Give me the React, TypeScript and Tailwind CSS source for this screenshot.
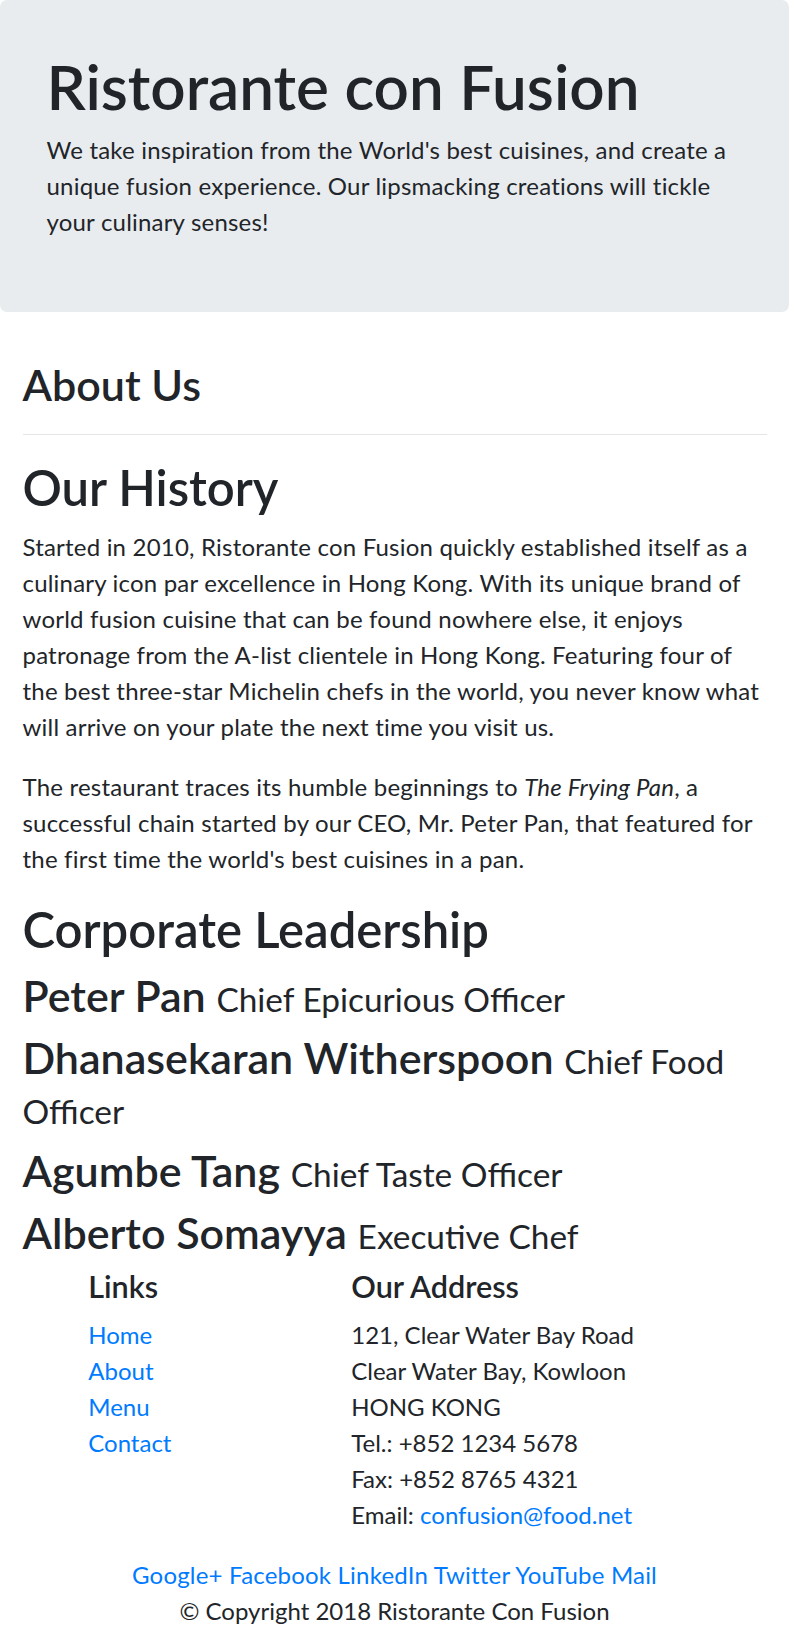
import React from "react";

const leaders = [
  { name: "Peter Pan", title: "Chief Epicurious Officer" },
  { name: "Dhanasekaran Witherspoon", title: "Chief Food Officer" },
  { name: "Agumbe Tang", title: "Chief Taste Officer" },
  { name: "Alberto Somayya", title: "Executive Chef" },
];

const links = ["Home", "About", "Menu", "Contact"];
const social = ["Google+", "Facebook", "LinkedIn", "Twitter", "YouTube", "Mail"];

export default function App() {
  return (
    <div className="min-h-screen bg-white text-[#212529] font-['Lato','Open_Sans',sans-serif] text-[24px] leading-[36px]">
      {/* Jumbotron */}
      <header className="bg-[#e9ecef] rounded-[7px] px-[24px] py-[48px] mb-[48px]">
        <div className="px-[22.5px]">
          <h1 className="text-[62px] leading-[72px] font-semibold mt-[2px] mb-[10px]">Ristorante con Fusion</h1>
          <p className="mb-[24px] tracking-[0.2px]">
            We take inspiration from the World's best cuisines, and create a unique fusion experience. Our
            lipsmacking creations will tickle your culinary senses!
          </p>
        </div>
      </header>

      <main className="px-[22.5px]">
        <h3 className="text-[43px] leading-[50.4px] font-semibold">About Us</h3>
        <hr className="my-[24px] border-t border-black/10" />

        <h2 className="text-[49px] leading-[57.6px] font-semibold mb-[12px]">Our History</h2>
        <p className="mb-[24px] tracking-[0.2px]">
          Started in 2010, Ristorante con Fusion quickly established itself as a culinary icon par excellence in
          Hong Kong. With its unique brand of world fusion cuisine that can be found nowhere else, it enjoys
          patronage from the A-list clientele in Hong Kong. Featuring four of the best three-star Michelin chefs in
          the world, you never know what will arrive on your plate the next time you visit us.
        </p>
        <p className="mb-[24px] tracking-[0.2px]">
          The restaurant traces its humble beginnings to <em>The Frying Pan</em>, a successful chain started by
          our CEO, Mr. Peter Pan, that featured for the first time the world's best cuisines in a pan.
        </p>

        <h2 className="text-[49px] leading-[57.6px] font-semibold mb-[12px]">Corporate Leadership</h2>
        {leaders.map((l, i) => (
          <h3
            key={l.name}
            className={`text-[43px] leading-[50.4px] font-semibold ${i === leaders.length - 1 ? "mb-[10px]" : "mb-[12px]"}`}
          >
            {l.name} <small className="text-[33.4px] leading-[40px] font-normal">{l.title}</small>
          </h3>
        ))}
      </main>

      {/* Footer */}
      <footer>
        <div className="flex">
          <div className="ml-[65.75px] w-[263px] px-[22.5px]">
            <h5 className="text-[30.6px] leading-[36px] font-semibold mb-[12px]">Links</h5>
            <ul className="list-none">
              {links.map((l) => (
                <li key={l}>
                  <a href="#" className="text-[#007bff]">
                    {l}
                  </a>
                </li>
              ))}
            </ul>
          </div>
          <div className="w-[460px] px-[22.5px]">
            <h5 className="text-[30.6px] leading-[36px] font-semibold mb-[12px]">Our Address</h5>
            <address className="not-italic mb-[24px]">
              121, Clear Water Bay Road
              <br />
              Clear Water Bay, Kowloon
              <br />
              HONG KONG
              <br />
              Tel.: +852 1234 5678
              <br />
              Fax: +852 8765 4321
              <br />
              Email:{" "}
              <a href="#" className="text-[#007bff]">
                confusion@food.net
              </a>
            </address>
          </div>
        </div>
        <div className="text-center tracking-[0.2px]">
          {social.map((s, i) => (
            <React.Fragment key={s}>
              {i > 0 && " "}
              <a href="#" className="text-[#007bff]">
                {s}
              </a>
            </React.Fragment>
          ))}
        </div>
        <p className="text-center mb-[24px]">© Copyright 2018 Ristorante Con Fusion</p>
      </footer>
    </div>
  );
}
